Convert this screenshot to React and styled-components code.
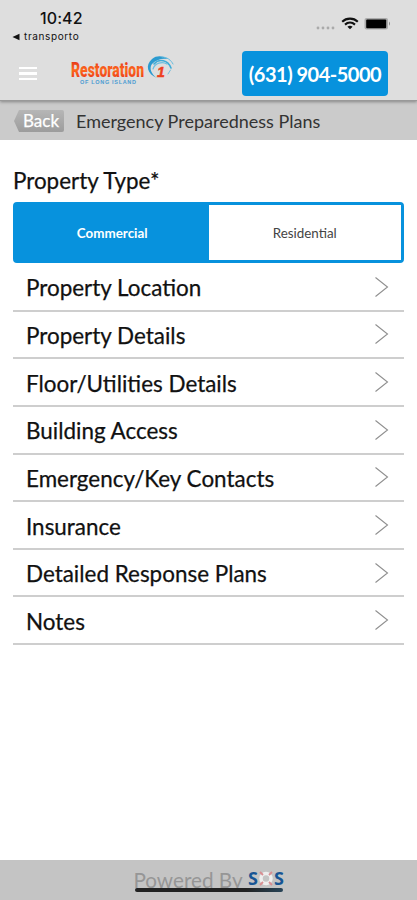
import { useState } from "react";
import styled, { createGlobalStyle } from "styled-components";

const GlobalStyle = createGlobalStyle`
  * {
    box-sizing: border-box;
  }

  body {
    margin: 0;
    font-family: Lato, "Open Sans", sans-serif;
    color: #111;
    background-color: white;
  }

  button {
    font-family: inherit;
    border: none;
    padding: 0;
    background: none;
  }
`;

const Screen = styled.div`
  height: 100vh;
  display: flex;
  flex-direction: column;
  overflow: hidden;
`;

const Header = styled.header`
  position: relative;
  height: 101px;
  flex-shrink: 0;
  background-color: #dedede;
  border-bottom: 1px solid #999;
  box-shadow: 0 1px 3px rgba(0, 0, 0, 0.35);
`;

const StatusBar = styled.div`
  height: 46px;
  padding: 8px 26px 0 12px;
  display: flex;
  justify-content: space-between;
`;

const Clock = styled.div`
  padding-left: 28px;
  font: 500 16px/20px Inter, sans-serif;
  letter-spacing: 0.1px;
`;

const BackApp = styled.div`
  display: flex;
  align-items: center;
  gap: 4px;
  font: 10px/17px Inter, sans-serif;
  letter-spacing: 0.62px;
`;

const StatusIcons = styled.div`
  height: 31px;
  display: flex;
  align-items: center;
`;

const NavBar = styled.div`
  height: 54px;
  padding: 5px 29px 4px 19px;
  display: flex;
  align-items: flex-start;
`;

const MenuButton = styled.button`
  width: 18px;
  margin-top: 16px;
  display: flex;
  flex-direction: column;
  gap: 3px;
`;

const MenuLine = styled.span`
  width: 100%;
  height: 2.3px;
  background-color: white;
`;

const Logo = styled.svg`
  width: 106px;
  height: 34px;
  margin: 3px 0 0 34px;
`;

const PhoneButton = styled.button`
  width: 146px;
  height: 45px;
  margin-left: auto;
  border-radius: 4px;
  background-color: #0792dd;
  color: white;
  font-size: 20px;
  font-weight: 700;
  letter-spacing: -0.5px;
  line-height: 46px;
  white-space: nowrap;
`;

const TitleBar = styled.div`
  height: 39px;
  flex-shrink: 0;
  padding: 1px 14px 0;
  display: flex;
  align-items: center;
  gap: 12px;
  background-color: #cbcbcb;
`;

const BackButton = styled.button`
  width: 50px;
  height: 22px;
  padding-left: 4px;
  border-radius: 2px;
  clip-path: polygon(0 50%, 5px 0, 100% 0, 100% 100%, 5px 100%);
  background: linear-gradient(#b6b6b6, #9c9c9c);
  color: white;
  font-size: 17px;
  line-height: 22px;
  -webkit-text-stroke: 0.25px white;
`;

const Title = styled.h1`
  margin: 0;
  font-size: 18px;
  font-weight: 400;
  color: #333;
`;

const Content = styled.main`
  flex: 1;
  padding: 26px 13px 0;
`;

const Label = styled.div`
  height: 36px;
  font-size: 22.4px;
  line-height: 30px;
  -webkit-text-stroke: 0.25px #111;
`;

const Toggle = styled.div`
  height: 61px;
  margin-bottom: 1px;
  display: flex;
  border: 3px solid #0792dd;
  border-radius: 4px;
  background-color: #0792dd;
`;

const ToggleOption = styled.button`
  flex: 1;
  font-size: 13.4px;
  font-weight: ${({ $active }) => ($active ? 700 : 400)};
  color: ${({ $active }) => ($active ? "white" : "#444")};
  background-color: ${({ $active }) => ($active ? "#0792dd" : "white")};
`;

const Row = styled.div`
  height: 47.65px;
  padding: 2px 15px 0 13px;
  display: flex;
  align-items: center;
  justify-content: space-between;
  border-bottom: 2px solid #cecece;
  font-size: 22.45px;
  -webkit-text-stroke: 0.25px #111;
`;

const Chevron = styled.svg`
  width: 15px;
  height: 22px;
  margin-top: -2px;
`;

const Footer = styled.footer`
  position: relative;
  height: 40px;
  flex-shrink: 0;
  display: flex;
  justify-content: center;
  gap: 5px;
  background-color: #c4c4c4;
  color: #969696;
  font-size: 20.7px;
  line-height: 40px;
`;

const Sos = styled.svg`
  width: 36px;
  height: 20px;
  margin-top: 9px;
  overflow: visible;
`;

const HomeIndicator = styled.div`
  position: absolute;
  left: 135px;
  bottom: 8px;
  width: 148px;
  height: 4px;
  border-radius: 2px;
  background: linear-gradient(90deg, #222, #222 75%, #284457);
`;

const sections = [
  "Property Location",
  "Property Details",
  "Floor/Utilities Details",
  "Building Access",
  "Emergency/Key Contacts",
  "Insurance",
  "Detailed Response Plans",
  "Notes",
];

const CompanyLogo = () => (
  <Logo viewBox="0 0 106 34">
    <defs>
      <linearGradient id="flame" x1="0" y1="0" x2="0" y2="1">
        <stop offset="0.1" stopColor="#e02f1b" />
        <stop offset="0.5" stopColor="#ff6a1c" />
        <stop offset="0.9" stopColor="#e9381b" />
      </linearGradient>
    </defs>
    <text
      x="0"
      y="22.8"
      fontFamily="Roboto, sans-serif"
      fontSize="20.5"
      fontWeight="900"
      fill="url(#flame)"
      textLength="73"
      lengthAdjust="spacingAndGlyphs"
    >
      Restoration
    </text>
    <text
      x="9"
      y="29.8"
      fontFamily="Liberation Sans, sans-serif"
      fontSize="5.5"
      fontWeight="700"
      fill="#4b9bd2"
      textLength="56"
    >
      OF LONG ISLAND
    </text>
    <g fill="none" strokeLinecap="round">
      <path d="M86 24C76 20 74 11 81 5C86 1 92 2 97 5C90 4 85 6 81 10C78 14 80 20 86 24Z" fill="#2b9bd0" />
      <path d="M83 10C88 4 97 6 100 14" stroke="#3eacd8" strokeWidth="1.6" />
      <path d="M82 15C84 9 91 7 96 10" stroke="#69bfe0" strokeWidth="1.2" />
      <path d="M91 3C96 3 100 6 102 10" stroke="#65bce0" strokeWidth="1" />
      <path d="M97 20L99.5 16" stroke="#76bddb" strokeWidth="1" />
    </g>
    <text
      x="86"
      y="23"
      fontFamily="Liberation Sans, sans-serif"
      fontSize="14"
      fontWeight="700"
      fontStyle="italic"
      fill="#ee3e1d"
      stroke="#ee3e1d"
      strokeWidth="0.5"
    >
      1
    </text>
  </Logo>
);

const SosLogo = () => (
  <Sos viewBox="0 0 36 20">
    <g fontFamily="Open Sans, sans-serif" fontSize="18" fontWeight="700" fill="#165594">
      <text x="0" y="16">S</text>
      <text x="26" y="16">S</text>
    </g>
    <circle cx="18" cy="9.5" r="5" fill="none" stroke="#eee" strokeWidth="3.5" />
    <path
      d="M12 3L15 6M24 3L21 6M12 16L15 13M24 16L21 13"
      fill="none"
      stroke="#d88d91"
      strokeWidth="1.8"
    />
  </Sos>
);

export default function App() {
  const [type, setType] = useState("Commercial");

  return (
    <Screen>
      <GlobalStyle />
      <Header>
        <StatusBar>
          <div>
            <Clock>10:42</Clock>
            <BackApp>
              <svg width="8" height="8" viewBox="0 0 8 8">
                <path d="M0.5 4L7.5 0.8V7.2Z" fill="#111" />
              </svg>
              transporto
            </BackApp>
          </div>
          <StatusIcons>
            <svg width="76" height="18" viewBox="0 0 76 18">
              <g fill="#aaa">
                <circle cx="3" cy="13" r="1.4" />
                <circle cx="8" cy="13" r="1.4" />
                <circle cx="13" cy="13" r="1.4" />
                <circle cx="18" cy="13" r="1.4" />
              </g>
              <g fill="none" stroke="#111" strokeWidth="2.1">
                <path d="M27.2 6.7C31.5 2.6 38.5 2.6 42.8 6.7" />
                <path d="M30 9.6C33 6.9 37 6.9 40 9.6" />
              </g>
              <path d="M32.4 11.7C34 10.4 36 10.4 37.6 11.7L35 14.3Z" fill="#111" />
              <rect x="49.5" y="2.9" width="23.5" height="11.5" rx="2" fill="#aaa" />
              <rect x="51.2" y="4.4" width="20" height="8.8" rx="1" fill="black" />
              <path d="M74 6.5Q76 8.6 74 10.7Z" fill="#888" />
            </svg>
          </StatusIcons>
        </StatusBar>
        <NavBar>
          <MenuButton aria-label="Menu">
            <MenuLine />
            <MenuLine />
            <MenuLine />
          </MenuButton>
          <CompanyLogo />
          <PhoneButton>(631) 904-5000</PhoneButton>
        </NavBar>
      </Header>
      <TitleBar>
        <BackButton>Back</BackButton>
        <Title>Emergency Preparedness Plans</Title>
      </TitleBar>
      <Content>
        <Label>Property Type*</Label>
        <Toggle>
          {["Commercial", "Residential"].map((option) => (
            <ToggleOption
              key={option}
              $active={option === type}
              onClick={() => setType(option)}
            >
              {option}
            </ToggleOption>
          ))}
        </Toggle>
        {sections.map((section) => (
          <Row key={section}>
            {section}
            <Chevron viewBox="0 0 15 22">
              <path d="M1.5 1.5L13.5 11L1.5 20.5" fill="none" stroke="#8f8f8f" strokeWidth="1.1" />
            </Chevron>
          </Row>
        ))}
      </Content>
      <Footer>
        Powered By
        <SosLogo />
        <HomeIndicator />
      </Footer>
    </Screen>
  );
}
